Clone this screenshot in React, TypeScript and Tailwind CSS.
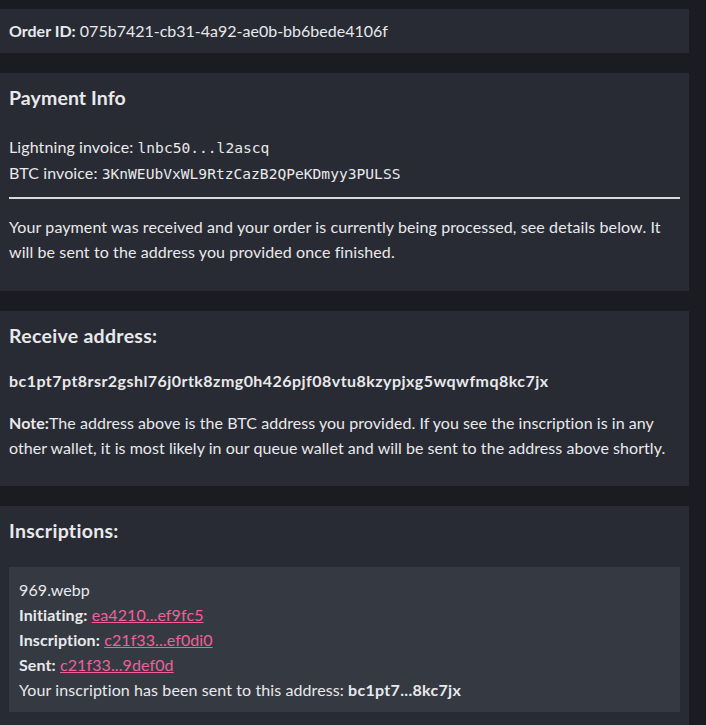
import React from "react";

const mono = { fontFamily: '"DejaVu Sans Mono", monospace' };

export default function App() {
  return (
    <div
      className="min-h-[725px] bg-[#1b1c21] pt-[9px] pb-[20px] text-[16px] leading-[25px] tracking-[0.1px] text-[#e8e9ec]"
      style={{ fontFamily: 'Lato, "Noto Sans", sans-serif' }}
    >
      <div className="w-[689px] flex flex-col gap-[20px]">
        <div className="bg-[#282b33] px-[9px] py-[10px] leading-[24px] tracking-normal">
          <span className="font-bold">Order ID:</span> 075b7421-cb31-4a92-ae0b-bb6bede4106f
        </div>

        <div className="bg-[#282b33] px-[9px] pt-[10px] pb-[27px]">
          <h2 className="text-[19.5px] font-bold leading-[29px]">Payment Info</h2>
          <div className="mt-[22px]">
            Lightning invoice: <span className="text-[14.6px] tracking-normal" style={mono}>lnbc50...l2ascq</span>
          </div>
          <div>
            BTC invoice: <span className="text-[14.6px] tracking-normal" style={mono}>3KnWEUbVxWL9RtzCazB2QPeKDmyy3PULSS</span>
          </div>
          <div className="mt-[11px] h-[2px] bg-[#d9d9d9]" />
          <p className="mt-[15px]">
            Your payment was received and your order is currently being processed, see details below. It
            will be sent to the address you provided once finished.
          </p>
        </div>

        <div className="bg-[#282b33] px-[9px] pt-[10px] pb-[26px]">
          <h2 className="text-[19.5px] font-bold leading-[29px] tracking-[0.3px]">Receive address:</h2>
          <div className="mt-[18px] font-bold tracking-[0.45px]">bc1pt7pt8rsr2gshl76j0rtk8zmg0h426pjf08vtu8kzypjxg5wqwfmq8kc7jx</div>
          <p className="mt-[17px] tracking-[0.05px]">
            <span className="font-bold">Note:</span>The address above is the BTC address you provided. If you see the inscription is in any
            other wallet, it is most likely in our queue wallet and will be sent to the address above shortly.
          </p>
        </div>

        <div className="bg-[#282b33] px-[9px] pt-[10px] pb-[20px]">
          <h2 className="text-[19.5px] font-bold leading-[29px] tracking-[0.3px]">Inscriptions:</h2>
          <div className="mt-[22px] bg-[#353a42] px-[10px] pt-[10px] pb-[10px]">
            <div>969.webp</div>
            <div>
              <span className="font-bold">Initiating:</span>{" "}
              <a className="text-[#f0609b] underline">ea4210...ef9fc5</a>
            </div>
            <div>
              <span className="font-bold">Inscription:</span>{" "}
              <a className="text-[#f0609b] underline">c21f33...ef0di0</a>
            </div>
            <div>
              <span className="font-bold">Sent:</span>{" "}
              <a className="text-[#f0609b] underline">c21f33...9def0d</a>
            </div>
            <div>
              Your inscription has been sent to this address: <span className="font-bold tracking-[0.3px]">bc1pt7...8kc7jx</span>
            </div>
          </div>
        </div>
      </div>
    </div>
  );
}
